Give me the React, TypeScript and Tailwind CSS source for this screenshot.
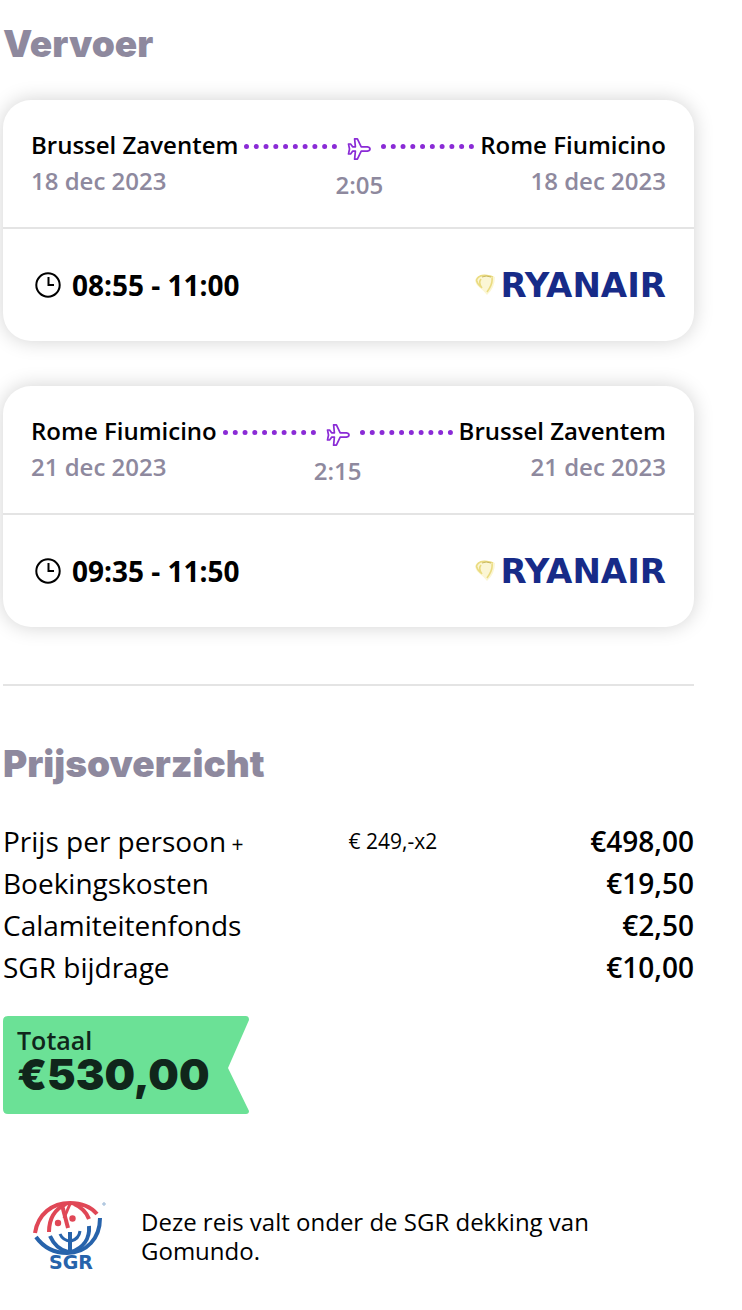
type Flight = {
  from: string;
  to: string;
  date: string;
  duration: string;
  times: string;
};

const flights: Flight[] = [
  {
    from: "Brussel Zaventem",
    to: "Rome Fiumicino",
    date: "18 dec 2023",
    duration: "2:05",
    times: "08:55 - 11:00",
  },
  {
    from: "Rome Fiumicino",
    to: "Brussel Zaventem",
    date: "21 dec 2023",
    duration: "2:15",
    times: "09:35 - 11:50",
  },
];

const prices = [
  { label: "Prijs per persoon", extra: "€ 249,-x2", amount: "€498,00" },
  { label: "Boekingskosten", amount: "€19,50" },
  { label: "Calamiteitenfonds", amount: "€2,50" },
  { label: "SGR bijdrage", amount: "€10,00" },
];

function PlaneIcon() {
  return (
    <svg viewBox="0 0 24 24" className="size-6 shrink-0" fill="none" stroke="#8a2bd6" strokeWidth="1.7" strokeLinejoin="round" aria-hidden="true">
      <path d="M1.5 7H3.6L5.6 9.8H8.4L7.6 1.8H10.4L14.2 9.8H20.5Q23 10.3 23 12Q23 13.7 20.5 14.2H14.2L10.4 22.2H7.6L8.4 14.2H5.6L3.6 17H1.5L2.5 12Z" />
    </svg>
  );
}

function ClockIcon() {
  return (
    <svg viewBox="0 0 26 26" className="size-[26px] shrink-0" fill="none" stroke="#000" strokeWidth="2" aria-hidden="true">
      <circle cx="13" cy="13" r="11.7" />
      <path d="M13.5 5V13H19" />
    </svg>
  );
}

function RyanairLogo() {
  return (
    <div className="flex items-center gap-1">
      <svg viewBox="0 0 22 22" className="size-[22px]" fill="none" aria-hidden="true">
        <path d="M1 7Q2 1 9 1Q16 0 21 3Q21 14 13 21Q10 17 6 14Q2 11 1 7Z" fill="#fbf6d4" />
        <path d="M9 1.5Q4 2 2.5 6Q3 10 7 13M6 2Q11 0 19 3M7 5Q4 9 8 14M18 4Q19 10 13 18" stroke="#eadb80" strokeWidth="1.6" />
        <path d="M8 3Q12 1 17 3" stroke="#c8b860" strokeWidth="1" />
      </svg>
      <span className="font-['DejaVu_Sans'] text-[34px] leading-8 font-bold text-[#172b88]">RYANAIR</span>
    </div>
  );
}

function SgrLogo() {
  return (
    <svg viewBox="0 0 74 72" className="h-[72px] w-[74px] shrink-0" fill="none" role="img" aria-label="SGR">
      <g stroke="#e04756" strokeWidth="4">
        <path d="M2 33C5 14 19 3 37 3C49 3 58 7 64 14" />
        <path d="M16 32C16 19 22 9 33 4" />
        <path d="M29 5L35 28" />
        <path d="M37 4L31 18" strokeWidth="3" />
        <path d="M41 4C48 7 53 11 56 19" />
      </g>
      <circle cx="25" cy="23" r="3.2" fill="#e04756" />
      <circle cx="39.5" cy="18.5" r="3.2" fill="#e04756" />
      <g stroke="#2763ab" strokeWidth="4">
        <path d="M3 37C11 48 21 53 34 53C54 53 67 38 67 18" />
        <path d="M17 36C21 45 27 50 35 52" />
        <path d="M27 34Q30 41 38 41Q46 39 47 31" strokeWidth="3" />
        <path d="M37 32V53" />
        <path d="M56 26C57 39 50 48 38 52" />
      </g>
      <circle cx="71" cy="4" r="1.2" stroke="#8dafd2" />
      <text x="38" y="69" textAnchor="middle" fill="#2763ab" fontFamily="DejaVu Sans" fontWeight="700" fontSize="19">SGR</text>
    </svg>
  );
}

function Dots() {
  return <span className="mb-[5px] w-[93px] border-t-[5px] border-dotted border-[#8a2bd6]" />;
}

function FlightCard({ flight }: { flight: Flight }) {
  return (
    <article className="rounded-[28px] bg-white shadow-[0_0_20px_rgba(0,0,0,0.18)]">
      <div className="flex justify-between border-b-2 border-[#e4e4e4] px-7 pt-[27px] pb-6 text-2xl leading-9 font-semibold whitespace-nowrap">
        <div>
          <p>{flight.from}</p>
          <p className="text-[#8e899e]">{flight.date}</p>
        </div>
        <div className="flex flex-1 flex-col items-center">
          <div className="flex h-10 w-full items-center justify-between px-1.5 pt-1">
            <Dots />
            <PlaneIcon />
            <Dots />
          </div>
          <p className="text-[#8e899e]">{flight.duration}</p>
        </div>
        <div className="text-right">
          <p>{flight.to}</p>
          <p className="text-[#8e899e]">{flight.date}</p>
        </div>
      </div>
      <div className="flex h-28 items-center justify-between px-7">
        <div className="flex items-center gap-[11px] pl-1 text-[28px] font-bold">
          <ClockIcon />
          <p>{flight.times}</p>
        </div>
        <RyanairLogo />
      </div>
    </article>
  );
}

export default function App() {
  return (
    <main className="bg-white pt-5 pr-12 pb-8 pl-[3px] font-['Open_Sans',sans-serif] text-black">
      <section>
        <h2 className="font-['Inter'] text-[37px] leading-12 font-black text-[#8e899e]">Vervoer</h2>
        <div className="mt-8 flex flex-col gap-[45px]">
          {flights.map((flight) => (
            <FlightCard key={flight.date} flight={flight} />
          ))}
        </div>
      </section>

      <hr className="mt-[57px] border-t-2 border-[#e4e4e4]" />

      <section className="mt-[54px]">
        <h2 className="font-['Inter'] text-[37px] leading-12 font-black text-[#8e899e]">Prijsoverzicht</h2>
        <table className="mt-8 w-full table-fixed text-[28px] leading-[42px]">
          <tbody>
            {prices.map((price) => (
              <tr key={price.label}>
                <th scope="row" className="w-1/2 text-left font-normal">
                  {price.label}
                  {price.extra && <span className="text-[21px] leading-5"> +</span>}
                </th>
                <td className="text-[21px]">{price.extra}</td>
                <td className="text-right font-semibold">{price.amount}</td>
              </tr>
            ))}
          </tbody>
        </table>

        {/* Total ribbon */}
        <div className="relative mt-7 h-[98px] w-[246px] px-3.5 pt-2.5 text-[#10261b]">
          <svg viewBox="0 0 246 98" className="absolute inset-0 size-full" aria-hidden="true">
            <path d="M5 0H243Q246 0 246 4L225 52L246 95Q246 98 243 98H5Q0 98 0 93V5Q0 0 5 0Z" fill="#6be196" />
          </svg>
          <p className="relative text-[25px] leading-7 font-semibold">Totaal</p>
          <p className="relative font-['Inter'] text-[43px] leading-10 font-black">€530,00</p>
        </div>
      </section>

      <div className="mt-[86px] flex items-center gap-[34px] pl-[30px]">
        <SgrLogo />
        <p className="max-w-[480px] text-2xl leading-[29px]">Deze reis valt onder de SGR dekking van Gomundo.</p>
      </div>
    </main>
  );
}
